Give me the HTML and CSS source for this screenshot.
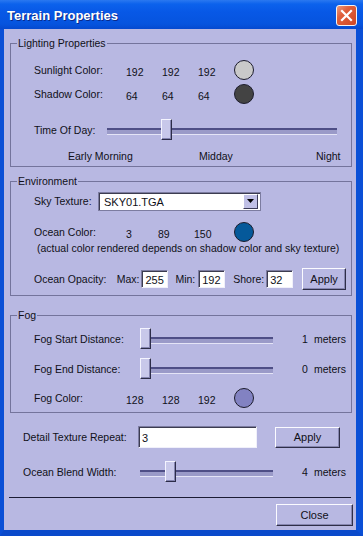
FILE: index.html
```html
<!DOCTYPE html>
<html lang="en">
  <head>
    <meta charset="UTF-8" />
    <meta name="viewport" content="width=device-width, initial-scale=1.0" />
    <title>Terrain Properties</title>
    <link rel="stylesheet" href="styles.css">
  </head>
  <body>
    <div class="window">
      <div class="titlebar">
        <span class="title">Terrain Properties</span>
        <span class="close-x">
          <svg width="13" height="13" viewBox="0 0 13 13">
            <path d="M2 2 L11 11 M11 2 L2 11" stroke="#fff" stroke-width="2.2" stroke-linecap="square" />
          </svg>
        </span>
      </div>

      <div class="client">
        <fieldset class="group lighting">
          <legend>Lighting Properties</legend>

          <div class="row color-row sun-row">
            <span class="label">Sunlight Color:</span>
            <span class="val">192</span>
            <span class="val">192</span>
            <span class="val">192</span>
            <span class="swatch swatch-sun"></span>
          </div>

          <div class="row color-row">
            <span class="label">Shadow Color:</span>
            <span class="val">64</span>
            <span class="val">64</span>
            <span class="val">64</span>
            <span class="swatch swatch-shadow"></span>
          </div>

          <div class="row time-row">
            <span class="label time-label">Time Of Day:</span>
            <div class="slider time-slider">
              <span class="thumb" style="left: 54px"></span>
            </div>
          </div>

          <div class="ticks">
            <span>Early Morning</span>
            <span>Midday</span>
            <span>Night</span>
          </div>
        </fieldset>

        <fieldset class="group environment">
          <legend>Environment</legend>

          <div class="row sky-row">
            <span class="label sky-label">Sky Texture:</span>
            <div class="select">
              <span class="select-text">SKY01.TGA</span>
              <span class="select-btn">
                <svg width="7" height="4" viewBox="0 0 7 4"><path d="M0 0 H7 L3.5 4 Z" fill="#000" /></svg>
              </span>
            </div>
          </div>

          <div class="row ocean-row">
            <span class="label">Ocean Color:</span>
            <span class="val">3</span>
            <span class="val">89</span>
            <span class="val">150</span>
            <span class="swatch swatch-ocean"></span>
          </div>

          <div class="note">(actual color rendered depends on shadow color and sky texture)</div>

          <div class="row opacity-row">
            <span class="label opacity-label">Ocean Opacity:</span>
            <span class="field">
              <span>Max:</span>
              <span class="input small">255</span>
            </span>
            <span class="field field-min">
              <span>Min:</span>
              <span class="input small">192</span>
            </span>
            <span class="field field-shore">
              <span>Shore:</span>
              <span class="input small">32</span>
            </span>
            <button class="btn btn-apply-small">Apply</button>
          </div>
        </fieldset>

        <fieldset class="group fog">
          <legend>Fog</legend>

          <div class="row slider-row fog-start">
            <span class="label fog-label">Fog Start Distance:</span>
            <div class="slider short-slider">
              <span class="thumb" style="left: 0px"></span>
            </div>
            <span class="meters"><span>1</span><span>meters</span></span>
          </div>

          <div class="row slider-row fog-end">
            <span class="label fog-label">Fog End Distance:</span>
            <div class="slider short-slider">
              <span class="thumb" style="left: 0px"></span>
            </div>
            <span class="meters"><span>0</span><span>meters</span></span>
          </div>

          <div class="row color-row fog-color">
            <span class="label">Fog Color:</span>
            <span class="val">128</span>
            <span class="val">128</span>
            <span class="val">192</span>
            <span class="swatch swatch-fog"></span>
          </div>
        </fieldset>

        <div class="extra">
          <div class="row detail-row">
            <span class="label detail-label">Detail Texture Repeat:</span>
            <span class="input wide">3</span>
            <button class="btn btn-apply">Apply</button>
          </div>

          <div class="row slider-row blend-row">
            <span class="label blend-label">Ocean Blend Width:</span>
            <div class="slider short-slider">
              <span class="thumb" style="left: 25px"></span>
            </div>
            <span class="meters"><span>4</span><span>meters</span></span>
          </div>
        </div>

        <div class="separator"></div>

        <div class="footer">
          <button class="btn btn-close">Close</button>
        </div>
      </div>
    </div>
  </body>
</html>
```

FILE: styles.css
```css
* {
  margin: 0;
  padding: 0;
  box-sizing: border-box;
}

body {
  font-family: "Liberation Sans", Arial, sans-serif;
  font-size: 10.5px;
  color: #101018;
  background-color: #0a4fd6;
}

.window {
  width: 363px;
  height: 536px;
  display: flex;
  flex-direction: column;
  background-color: #0b55dd;
  border-left: 4px solid #0a4fd6;
  border-right: 7px solid #0a4fd6;
  border-bottom: 6px solid #0a4acb;
}

.titlebar {
  height: 29px;
  margin: 0 -7px 0 -4px;
  display: flex;
  align-items: center;
  justify-content: space-between;
  padding: 0 6px 0 7px;
  background: linear-gradient(#2a78f0 0, #0c62ec 4px, #0858e6 12px, #0654de 24px, #0549cf 29px);
}

.title {
  color: white;
  font-size: 13px;
  font-weight: bold;
  text-shadow: 1px 1px #0b2a8a;
  padding-top: 1px;
}

.close-x {
  width: 21px;
  height: 21px;
  display: flex;
  align-items: center;
  justify-content: center;
  border: 1px solid #f4f4f4;
  border-radius: 3px;
  background: linear-gradient(135deg, #ec9a7d 0, #e0603c 35%, #cf4624 100%);
  margin-top: 2px;
}

.client {
  flex: 1;
  background-color: #b8b8e2;
  padding: 0 4px 0 6px;
  display: flex;
  flex-direction: column;
}

.group {
  border: 1px solid #74749c;
  padding: 0 5px 0 6px;
  min-width: 0;
}

.group legend {
  padding: 0 1px;
  line-height: 13px;
  margin-left: 0;
}

.lighting {
  margin-top: 8px;
  padding-bottom: 3px;
}

.environment {
  margin-top: 8px;
  padding-bottom: 5px;
}

.fog {
  margin-top: 13px;
  padding-bottom: 3px;
}

.row {
  display: flex;
  align-items: center;
  padding-left: 17px;
  white-space: nowrap;
}

/* colour rows */
.color-row {
  height: 24px;
}

.sun-row {
  margin-top: 8px;
}

.color-row .label {
  width: 92px;
}

.val {
  width: 36px;
  padding-top: 3px;
}

.swatch {
  width: 20px;
  height: 20px;
  border-radius: 50%;
  border: 1px solid #1c1c2c;
}

.swatch-sun {
  background-color: #c9c9c9;
}

.swatch-shadow {
  background-color: #434343;
}

.swatch-ocean {
  background-color: #05599a;
}

.swatch-fog {
  background-color: #8282c2;
}

/* sliders */
.slider {
  position: relative;
  height: 22px;
}

.slider::before {
  content: "";
  position: absolute;
  left: 0;
  right: 0;
  top: 9px;
  height: 4px;
  border-top: 2px solid #4e4e86;
  border-bottom: 1px solid #e4e4f6;
  background-color: #9a9ac8;
}

.thumb {
  position: absolute;
  top: 0;
  width: 11px;
  height: 21px;
  background-color: #c8c8ea;
  border-top: 1px solid #f4f4ff;
  border-left: 1px solid #f4f4ff;
  border-right: 1px solid #2c2c48;
  border-bottom: 1px solid #2c2c48;
  box-shadow: inset -1px -1px #8484b0;
}

.time-row {
  height: 24px;
  margin-top: 12px;
  padding-right: 9px;
}

.time-label {
  width: 73px;
}

.time-slider {
  flex: 1;
}

.ticks {
  margin-top: 7px;
  height: 14px;
  line-height: 14px;
  padding-left: 51px;
  display: grid;
  grid-template-columns: 131px 117px auto;
}

/* environment */
.sky-row {
  height: 22px;
  margin-top: 2px;
}

.sky-label {
  width: 64px;
}

.select {
  width: 163px;
  height: 19px;
  display: flex;
  align-items: center;
  justify-content: space-between;
  background-color: white;
  border: 1px solid #7c7ca0;
  box-shadow: inset 1px 1px #3c3c50;
  padding: 0 2px 0 5px;
  font-size: 11px;
}

.select-text {
  padding-top: 1px;
}

.select-btn {
  width: 15px;
  height: 15px;
  display: flex;
  align-items: center;
  justify-content: center;
  background-color: #c0c0e6;
  border-top: 1px solid #fff;
  border-left: 1px solid #fff;
  border-right: 1px solid #3c3c58;
  border-bottom: 1px solid #3c3c58;
}

.ocean-row {
  height: 20px;
  margin-top: 10px;
}

.ocean-row .label {
  width: 92px;
}

.ocean-row .val:nth-child(2) {
  width: 32px;
}

.ocean-row .val:nth-child(4) {
  width: 40px;
}

.note {
  height: 12px;
  line-height: 12px;
  padding-left: 20px;
  white-space: nowrap;
}

.opacity-row {
  height: 22px;
  margin-top: 14px;
}

.opacity-label {
  width: 83px;
}

.field {
  display: flex;
  align-items: center;
  gap: 2px;
}

.field-min {
  margin-left: 7px;
  gap: 3px;
}

.field-shore {
  margin-left: 8px;
}

.input {
  display: flex;
  align-items: center;
  height: 18px;
  background-color: white;
  border: 1px solid #f0f0fa;
  border-top-color: #7c7ca0;
  border-left-color: #7c7ca0;
  box-shadow: inset 1px 1px #3c3c50;
  padding: 1px 0 0 3px;
  font-size: 11px;
}

.input.small {
  width: 27px;
}

.input.wide {
  width: 119px;
  height: 22px;
}

/* buttons */
.btn {
  font-family: inherit;
  font-size: 11px;
  color: #101018;
  background-color: #b8b8e2;
  border: 1px solid;
  border-color: #fbfbff #2e2e48 #2e2e48 #fbfbff;
  box-shadow: inset -1px -1px #8686b0;
  cursor: pointer;
}

.btn-apply-small {
  width: 44px;
  height: 22px;
  margin-left: 9px;
}

.btn-apply {
  width: 65px;
  height: 21px;
  margin-left: 18px;
}

.btn-close {
  width: 77px;
  height: 22px;
}

/* fog */
.slider-row {
  height: 22px;
}

.fog-start {
  margin-top: 6px;
}

.fog-end {
  margin-top: 8px;
}

.fog-color {
  margin-top: 7px;
  height: 22px;
}

.fog-label {
  width: 106px;
}

.short-slider {
  width: 133px;
}

.meters {
  flex: 1;
  display: flex;
  justify-content: flex-end;
  gap: 6px;
}

/* lower section */
.extra .row {
  padding-left: 13px;
}

.extra .meters {
  padding-right: 6px;
}

.detail-row {
  height: 22px;
  margin-top: 13px;
}

.detail-label {
  width: 115px;
}

.blend-row {
  margin-top: 13px;
}

.blend-label {
  width: 117px;
}

.separator {
  margin: 14px 1px 0 -1px;
  height: 1px;
  background-color: #1c1c34;
}

.footer {
  margin-top: 6px;
  display: flex;
  justify-content: flex-end;
  margin-right: -1px;
}
```
